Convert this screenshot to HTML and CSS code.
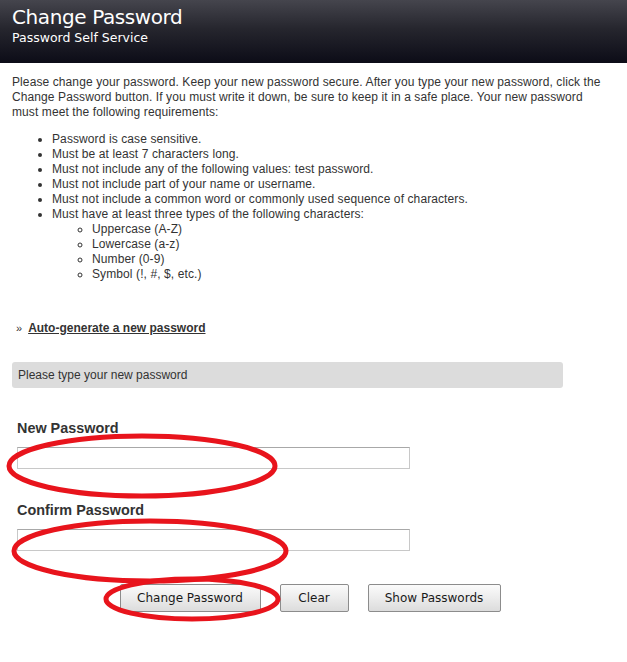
FILE: index.html
```html
<!DOCTYPE html>
<html>
<head>
<meta charset="utf-8">
<link rel="stylesheet" href="styles.css">
</head>
<body>
<div class="header">
  <div class="title">Change Password</div>
  <div class="subtitle">Password Self Service</div>
</div>
<div class="content">
  <p class="intro">Please change your password. Keep your new password secure. After you type your new password, click the Change Password button. If you must write it down, be sure to keep it in a safe place. Your new password must meet the following requirements:</p>
  <ul class="rules">
    <li>Password is case sensitive.</li>
    <li>Must be at least 7 characters long.</li>
    <li>Must not include any of the following values: test password.</li>
    <li>Must not include part of your name or username.</li>
    <li>Must not include a common word or commonly used sequence of characters.</li>
    <li>Must have at least three types of the following characters:
      <ul class="sub">
        <li>Uppercase (A-Z)</li>
        <li>Lowercase (a-z)</li>
        <li>Number (0-9)</li>
        <li>Symbol (!, #, $, etc.)</li>
      </ul>
    </li>
  </ul>
  <div class="autogen"><span class="raquo">»</span><a href="#">Auto-generate a new password</a></div>
  <div class="notice">Please type your new password</div>
  <div class="field">
    <label class="label">New Password</label>
    <input class="input" type="password">
  </div>
  <div class="field">
    <label class="label">Confirm Password</label>
    <input class="input" type="password">
  </div>
  <div class="buttons">
    <button class="btn btn-change">Change Password</button>
    <button class="btn btn-clear">Clear</button>
    <button class="btn btn-show">Show Passwords</button>
  </div>
</div>
<svg class="marks" width="627" height="662" viewBox="0 0 627 662">
  <ellipse cx="142" cy="466" rx="133" ry="30" />
  <ellipse cx="150" cy="551" rx="136" ry="30" />
  <ellipse cx="192" cy="599" rx="86" ry="20" />
</svg>
</body>
</html>
```
FILE: styles.css
```css
html, body {
  margin: 0;
  padding: 0;
  background: #fff;
}
body {
  position: relative;
  width: 627px;
  height: 662px;
  overflow: hidden;
  font-family: "Liberation Sans", Arial, sans-serif;
  font-size: 12px;
  color: #333;
}
.header {
  height: 63px;
  box-sizing: border-box;
  padding: 4px 0 0 12px;
  background: linear-gradient(to bottom, #45454d 0%, #26262e 45%, #0c0c17 100%);
  color: #fff;
  font-family: "DejaVu Sans", Tahoma, sans-serif;
}
.title {
  font-size: 20px;
  line-height: 26px;
  letter-spacing: -0.4px;
}
.subtitle {
  font-size: 12.5px;
  line-height: 16px;
}
.content {
  padding: 12px 0 0 12px;
  width: 605px;
}
.intro {
  margin: 0;
  width: 597px;
  line-height: 15px;
  letter-spacing: 0.1px;
}
.rules {
  margin: 12px 0 0 0;
  padding-left: 40px;
  line-height: 15px;
  letter-spacing: 0.1px;
}
.rules li {
  list-style: disc;
}
.sub {
  margin: 0;
  padding-left: 40px;
}
.sub li {
  list-style: circle;
}
.autogen {
  margin-top: 39px;
  padding-left: 4px;
  line-height: 15px;
  font-weight: bold;
}
.raquo {
  font-weight: normal;
  font-size: 11px;
  margin-right: 6px;
}
.autogen a {
  color: #333;
  text-decoration: underline;
}
.notice {
  margin-top: 26px;
  width: 551px;
  height: 26px;
  box-sizing: border-box;
  padding: 6px 0 0 6px;
  background: #dcdcdc;
  border-radius: 3px;
  line-height: 14px;
}
.field {
  padding-left: 5px;
}
.label {
  display: block;
  font-weight: bold;
  font-size: 14.4px;
  line-height: 16px;
  color: #333;
}
.notice + .field .label {
  margin-top: 32px;
}
.field + .field .label {
  margin-top: 33px;
}
.input {
  display: block;
  margin: 11px 0 0 0;
  width: 393px;
  height: 22px;
  box-sizing: border-box;
  border: 1px solid #c8c8c8;
  border-top-color: #a8a8a8;
  background: #fff;
  padding: 0 4px;
}
.buttons {
  display: flex;
  justify-content: center;
  gap: 19px;
  margin-top: 33px;
  margin-left: -12px;
  width: 627px;
  padding-right: 7px;
  box-sizing: border-box;
}
.btn {
  height: 28px;
  box-sizing: border-box;
  border: 1px solid #8c8c8c;
  border-radius: 2px;
  background: linear-gradient(to bottom, #fbfbfb 0%, #ececec 50%, #dcdcdc 100%);
  font-family: "DejaVu Sans", Tahoma, sans-serif;
  font-size: 12px;
  color: #1a1a1a;
  padding: 0;
}
.btn-change { width: 141px; }
.btn-clear { width: 69px; }
.btn-show { width: 133px; }
.marks {
  position: absolute;
  left: 0;
  top: 0;
  pointer-events: none;
}
.marks ellipse {
  fill: none;
  stroke: #e8141c;
  stroke-width: 5;
}
```
